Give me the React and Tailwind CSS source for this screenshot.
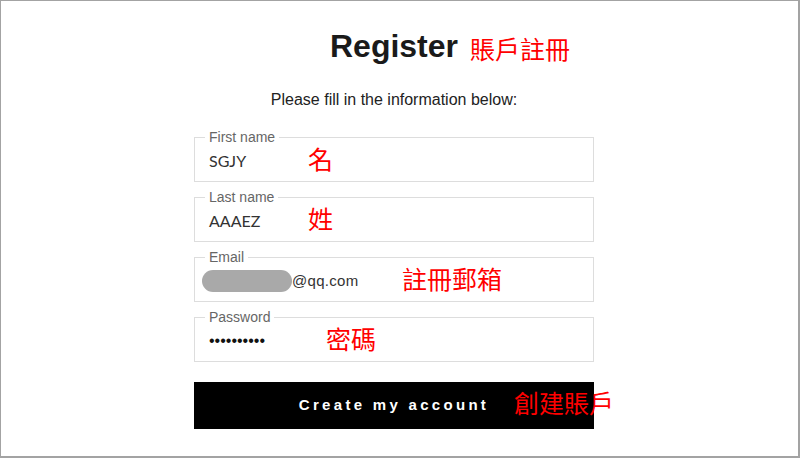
import React from 'react'

const fields = [
  { label: 'First name', value: 'SGJY', note: '名', noteLeft: 'left-[114px]' },
  { label: 'Last name', value: 'AAAEZ', note: '姓', noteLeft: 'left-[114px]' },
  { label: 'Email', value: '@qq.com', note: '註冊郵箱', noteLeft: 'left-[208px]', email: true },
  { label: 'Password', value: '••••••••••', note: '密碼', noteLeft: 'left-[132px]', password: true },
]

const cjk = { fontFamily: '"Noto Sans CJK TC", "Noto Sans CJK SC", sans-serif' }
const arial = { fontFamily: '"Liberation Sans", Arial, sans-serif' }

const Note = ({ children, className }) => (
  <span className={`absolute text-[25px] leading-[24px] text-[#ff0000] whitespace-nowrap ${className}`} style={cjk}>
    {children}
  </span>
)

const Field = ({ f }) => {
  return (
    <div className="relative">
      <fieldset className="border border-[#dddddd] pl-[10px] pr-3 pb-[4px] m-0">
        <legend className="px-1 text-[14px] leading-[16px] text-[#666666]" style={arial}>{f.label}</legend>
        {f.email ? (
          <div className="h-[32px] flex items-center -ml-[3px]">
            <div className="w-[90px] h-[22px] rounded-full bg-[#a9a9a9]"></div>
            <span className="text-[15px] tracking-[0.3px] text-[#333333]" style={arial}>{f.value}</span>
          </div>
        ) : f.password ? (
          <div className="h-[32px] flex items-center pl-1 text-[16px] text-[#111111]" style={arial}>{f.value}</div>
        ) : (
          <div className="h-[32px] flex items-center pl-1 text-[16px] text-[#333333]" style={{ fontFamily: 'Lato, sans-serif' }}>{f.value}</div>
        )}
      </fieldset>
      <Note className={`top-[17px] ${f.noteLeft}`}>{f.note}</Note>
    </div>
  )
}

const App = () => {
  return (
    <div className="w-[800px] h-[458px] bg-white border-t border-l border-r-2 border-b-2 border-[#a3a3a3] overflow-hidden">
      <div className="relative w-[400px] ml-[193px] pt-[25px] flex flex-col">
        <div className="relative">
          <h1 className="text-center text-[32px] leading-[40px] font-bold text-[#1a1a1a]" style={arial}>Register</h1>
          <Note className="top-[10px] left-[276px]">賬戶註冊</Note>
        </div>
        <p className="mt-[24px] text-center text-[16px] leading-[20px] text-[#222222]" style={arial}>
          Please fill in the information below:
        </p>
        <div className="mt-[19px] flex flex-col gap-[7px]">
          {fields.map((f) => <Field key={f.label} f={f} />)}
        </div>
        <div className="relative mt-[20px]">
          <button className="w-full h-[47px] bg-black text-white text-[15px] font-bold tracking-[3.3px] flex items-center justify-center" style={arial}>
            Create my account
          </button>
          <Note className="top-[8px] left-[320px]">創建賬戶</Note>
        </div>
      </div>
    </div>
  )
}

export default App
